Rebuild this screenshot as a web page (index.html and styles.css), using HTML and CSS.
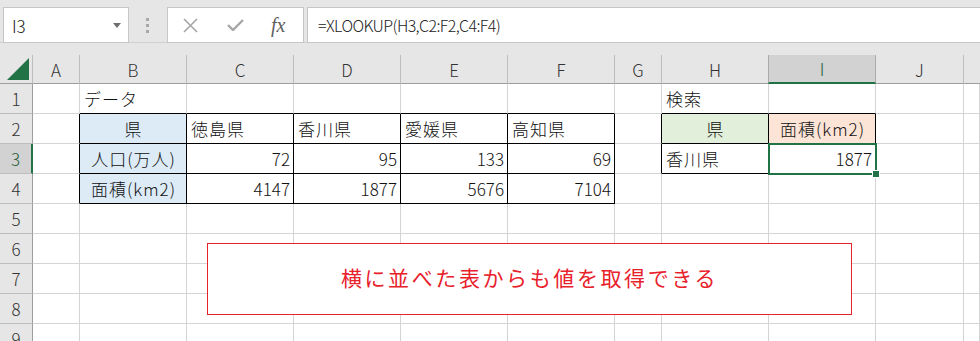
FILE: index.html
```html
<!DOCTYPE html>
<html lang="ja">
<head>
    <meta charset="UTF-8">
    <title>XLOOKUP</title>
<link rel="stylesheet" href="styles.css">
</head>
<body>
    <div id="barra">
        <div id="nombre">
            <span>I3</span>
            <svg width="8" height="5" viewBox="0 0 8 5"><path d="M0 0h8L4 5z" fill="#6e6e6e"/></svg>
        </div>
        <div id="puntos">
            <svg width="4" height="15" viewBox="0 0 4 15"><rect x="0" y="0" width="3" height="3" fill="#a8a8a8"/><rect x="0" y="6" width="3" height="3" fill="#a8a8a8"/><rect x="0" y="12" width="3" height="3" fill="#a8a8a8"/></svg>
        </div>
        <div id="botones">
            <svg width="15" height="15" viewBox="0 0 15 15"><path d="M1 1L14 14M14 1L1 14" stroke="#a6a6a6" stroke-width="1.6"/></svg>
            <svg width="17" height="12" viewBox="0 0 17 12"><path d="M1 6l5 5L16 1" stroke="#a6a6a6" stroke-width="2.4" fill="none"/></svg>
            <span class="fx">fx</span>
        </div>
        <div id="formula">=XLOOKUP(H3,C2:F2,C4:F4)</div>
    </div>

    <div id="hoja">
        <div class="esq"><svg width="22" height="22" viewBox="0 0 22 22"><path d="M22 0V22H0z" fill="#217346"/></svg></div>
        <div class="ch">A</div><div class="ch">B</div><div class="ch">C</div><div class="ch">D</div><div class="ch">E</div><div class="ch">F</div><div class="ch">G</div><div class="ch">H</div><div class="ch sel">I</div><div class="ch">J</div><div class="ch ult"></div>

        <div class="rh">1</div>
        <div class="c"></div><div class="c bkb">データ</div><div class="c bkb"></div><div class="c bkb"></div><div class="c bkb"></div><div class="c bkb"></div><div class="c"></div><div class="c bkb">検索</div><div class="c bkb"></div><div class="c"></div><div class="c"></div>

        <div class="rh">2</div>
        <div class="c bkr"></div><div class="c bk ctr azul">県</div><div class="c bk">徳島県</div><div class="c bk">香川県</div><div class="c bk">愛媛県</div><div class="c bk">高知県</div><div class="c bkr"></div><div class="c bk ctr verde">県</div><div class="c bk ctr naranja">面積(km2)</div><div class="c"></div><div class="c"></div>

        <div class="rh sel">3</div>
        <div class="c bkr"></div><div class="c bk ctr azul">人口(万人)</div><div class="c bk num">72</div><div class="c bk num">95</div><div class="c bk num">133</div><div class="c bk num">69</div><div class="c bkr"></div><div class="c bk">香川県</div><div class="c bk num activa">1877</div><div class="c"></div><div class="c"></div>

        <div class="rh">4</div>
        <div class="c bkr"></div><div class="c bk ctr azul">面積(km2)</div><div class="c bk num">4147</div><div class="c bk num">1877</div><div class="c bk num">5676</div><div class="c bk num">7104</div><div class="c"></div><div class="c"></div><div class="c"></div><div class="c"></div><div class="c"></div>

        <div class="rh">5</div>
        <div class="c"></div><div class="c"></div><div class="c"></div><div class="c"></div><div class="c"></div><div class="c"></div><div class="c"></div><div class="c"></div><div class="c"></div><div class="c"></div><div class="c"></div>

        <div class="rh">6</div>
        <div class="c"></div><div class="c"></div><div class="c"></div><div class="c"></div><div class="c"></div><div class="c"></div><div class="c"></div><div class="c"></div><div class="c"></div><div class="c"></div><div class="c"></div>

        <div class="rh">7</div>
        <div class="c"></div><div class="c"></div><div class="c"></div><div class="c"></div><div class="c"></div><div class="c"></div><div class="c"></div><div class="c"></div><div class="c"></div><div class="c"></div><div class="c"></div>

        <div class="rh">8</div>
        <div class="c"></div><div class="c"></div><div class="c"></div><div class="c"></div><div class="c"></div><div class="c"></div><div class="c"></div><div class="c"></div><div class="c"></div><div class="c"></div><div class="c"></div>

        <div class="rh">9</div>
        <div class="c"></div><div class="c"></div><div class="c"></div><div class="c"></div><div class="c"></div><div class="c"></div><div class="c"></div><div class="c"></div><div class="c"></div><div class="c"></div><div class="c"></div>

        <!-- cuadro de texto encima de la hoja -->
        <div id="nota">横に並べた表からも値を取得できる</div>
    </div>
</body>
</html>
```

FILE: styles.css
```css
* {
    box-sizing: border-box;
}
body {
    margin: 0;
    background-color: #e6e6e6;
    font-family: "Noto Sans CJK JP", "Noto Sans", sans-serif;
    font-weight: 300;
    overflow: hidden;
    height: 341px;
}
#barra {
    display: flex;
    height: 43px;
    padding: 7px 0 0 3px;
    margin-bottom: 12px;
    border-bottom: 1px solid #d0d0d0;
}
#nombre {
    width: 126px;
    height: 36px;
    background-color: white;
    border: 1px solid #c6c6c6;
    display: flex;
    align-items: center;
    justify-content: space-between;
    padding: 0 7px 0 8px;
    font-size: 17px;
    color: #222;
}
#puntos {
    width: 38px;
    display: flex;
    justify-content: center;
    padding-top: 11px;
}
#botones {
    width: 137px;
    height: 36px;
    background-color: white;
    border: 1px solid #c6c6c6;
    display: flex;
    align-items: center;
    padding-left: 15px;
    gap: 29px;
}
.fx {
    font-family: "Liberation Serif", serif;
    font-style: italic;
    font-size: 20px;
    color: #5e5e5e;
    margin-left: -2px;
}
#formula {
    flex: 1;
    height: 36px;
    margin-left: 3px;
    background-color: white;
    border: 1px solid #c6c6c6;
    border-right: none;
    padding-left: 10px;
    display: flex;
    align-items: center;
    font-size: 16px;
    letter-spacing: -0.6px;
    color: #222;
}
#hoja {
    position: relative;
    display: grid;
    grid-template-columns: 33px 47px 107px 107px 107px 107px 107px 47px 107px 107px 88px 1fr;
    grid-template-rows: 29px repeat(9, 30px);
    font-size: 17px;
    color: #111;
}
.esq {
    border-right: 1px solid #bdbdbd;
    border-bottom: 1px solid #9e9e9e;
    display: flex;
    align-items: flex-end;
    justify-content: flex-end;
    padding: 0 3px 3px 0;
}
.ch {
    border-right: 1px solid #bdbdbd;
    border-bottom: 1px solid #9e9e9e;
    display: flex;
    align-items: center;
    justify-content: center;
    color: #333;
}
.ch.sel {
    background-color: #d2d2d2;
    border-left: 1px solid #ababab;
    margin-left: -1px;
    border-right-color: #ababab;
    border-bottom: 2px solid #217346;
    color: #1d5b36;
}
.ch.ult {
    border-right: none;
}
.rh {
    border-right: 1px solid #9e9e9e;
    border-bottom: 1px solid #bdbdbd;
    display: flex;
    align-items: center;
    justify-content: center;
    color: #333;
}
.rh.sel {
    background-color: #d2d2d2;
    border-right: 2px solid #217346;
    color: #1d5b36;
}
.c {
    background-color: white;
    border-right: 1px solid #d4d4d4;
    border-bottom: 1px solid #d4d4d4;
    display: flex;
    align-items: center;
    padding: 0 3px 0 4px;
    white-space: nowrap;
    overflow: hidden;
    letter-spacing: 1px;
}
.bk {
    border-right-color: #000;
    border-bottom-color: #000;
}
.bkr {
    border-right-color: #000;
}
.bkb {
    border-bottom-color: #000;
}
.ctr {
    justify-content: center;
}
.num {
    justify-content: flex-end;
    letter-spacing: 0;
}
.azul {
    background-color: #ddebf7;
}
.verde {
    background-color: #e2efda;
}
.naranja {
    background-color: #fce4d6;
}
.activa {
    position: relative;
    z-index: 1;
    overflow: visible;
    outline: 2px solid #217346;
    outline-offset: -1px;
}
.activa::after {
    content: "";
    position: absolute;
    right: -5px;
    bottom: -5px;
    width: 6px;
    height: 6px;
    background-color: #217346;
    border: 1px solid white;
}
#nota {
    position: absolute;
    left: 207px;
    top: 188px;
    width: 645px;
    height: 72px;
    background-color: white;
    border: 1px solid #e8212b;
    color: #e8212b;
    font-size: 21px;
    font-weight: 400;
    letter-spacing: 2.6px;
    display: flex;
    align-items: center;
    justify-content: center;
    padding-bottom: 4px;
    z-index: 2;
}
```
